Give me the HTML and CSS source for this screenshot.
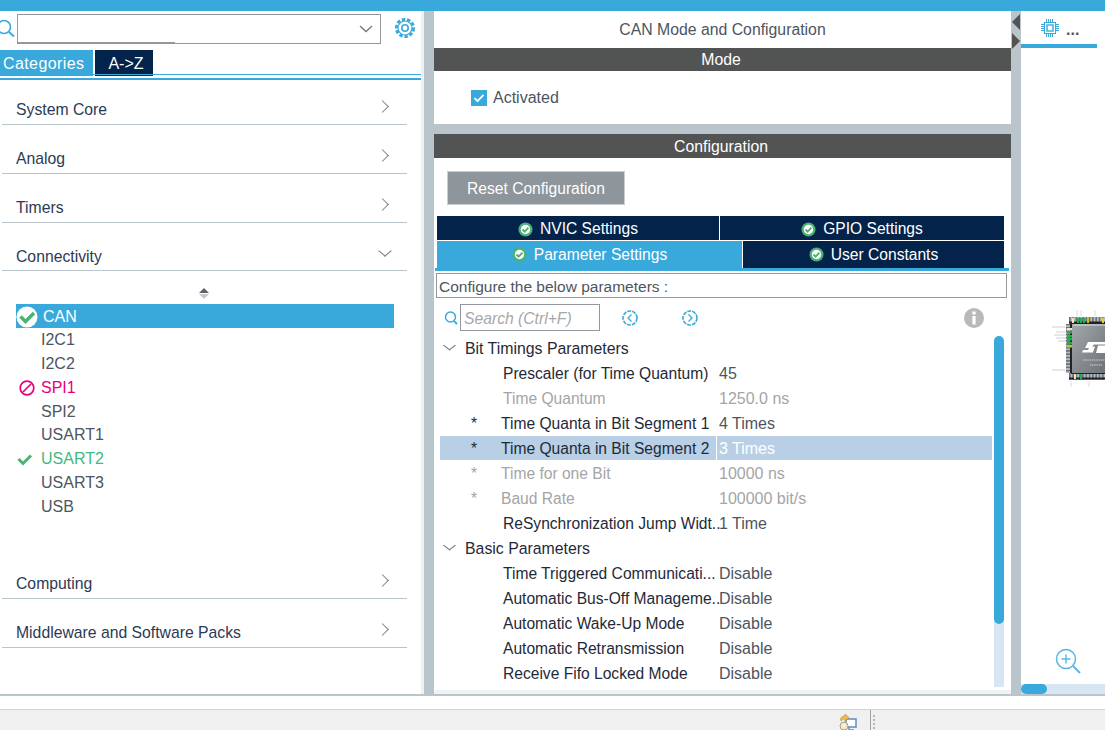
FILE: index.html
```html
<!DOCTYPE html>
<html lang="en">
<head>
    <meta charset="UTF-8">
    <meta name="viewport" content="width=device-width, initial-scale=1.0">
    <title>CAN Mode and Configuration</title>
    <link rel="stylesheet" href="styles.css">
</head>
<body>
    <svg class="defs" width="0" height="0">
        <symbol id="ok" viewBox="0 0 16 16">
            <circle cx="8" cy="8" r="7.5" fill="#4bb175"/>
            <circle cx="8" cy="8" r="5" fill="#fff"/>
            <path d="M4.8 8l2.3 2.4 4-4.4" fill="none" stroke="#4bb175" stroke-width="2"/>
        </symbol>
    </svg>

    <div class="topbar"></div>

    <div class="main">
        <!-- left column: categories -->
        <div class="left">
            <div class="search-row">
                <svg class="search-icon" width="17" height="30" viewBox="0 0 17 30"><circle cx="4" cy="13" r="6.5" fill="none" stroke="#39a9dc" stroke-width="1.6"/><path d="M9 18l5 4.5" stroke="#39a9dc" stroke-width="2"/></svg>
                <div class="combo">
                    <svg width="14" height="8" viewBox="0 0 14 8"><path d="M1 1l6 5.5L13 1" fill="none" stroke="#777" stroke-width="1.3"/></svg>
                </div>
                <svg class="gear" width="22" height="22" viewBox="0 0 22 22">
                    <circle cx="11" cy="11" r="8.6" fill="none" stroke="#39a9dc" stroke-width="3" stroke-dasharray="3.4 1.9"/>
                    <circle cx="11" cy="11" r="7" fill="#fff" stroke="#39a9dc" stroke-width="1.2"/>
                    <circle cx="11" cy="11" r="3.2" fill="none" stroke="#39a9dc" stroke-width="1.6"/>
                </svg>
            </div>
            <div class="tabs">
                <div class="tab tab-on">Categories</div>
                <div class="tab tab-off">A-&gt;Z</div>
            </div>

            <div class="cat"><span>System Core</span><i class="chev-r"></i></div>
            <div class="cat"><span>Analog</span><i class="chev-r"></i></div>
            <div class="cat"><span>Timers</span><i class="chev-r"></i></div>
            <div class="cat cat-open"><span>Connectivity</span><i class="chev-d"></i></div>

            <div class="peripherals">
                <div class="sorter"><i class="sort-up"></i><i class="sort-down"></i></div>
                <div class="item item-selected">
                    <span class="item-icon"><svg width="22" height="22" viewBox="0 0 22 22"><circle cx="11" cy="11" r="10.5" fill="#fff"/><path d="M4.5 10.5l5 5L18 7" fill="none" stroke="#4bb175" stroke-width="3.4"/></svg></span>CAN
                </div>
                <div class="item">I2C1</div>
                <div class="item">I2C2</div>
                <div class="item item-pink">
                    <span class="item-icon"><svg width="18" height="18" viewBox="0 0 18 18"><circle cx="9" cy="9" r="6.8" fill="none" stroke="#e6007e" stroke-width="1.7"/><path d="M5 13l8-8" stroke="#e6007e" stroke-width="1.7"/></svg></span>SPI1
                </div>
                <div class="item">SPI2</div>
                <div class="item">USART1</div>
                <div class="item item-green">
                    <span class="item-icon"><svg width="18" height="18" viewBox="0 0 18 18"><path d="M2.5 9l4.5 4.5 8-8" fill="none" stroke="#4bb175" stroke-width="3"/></svg></span>USART2
                </div>
                <div class="item">USART3</div>
                <div class="item">USB</div>
            </div>

            <div class="cat"><span>Computing</span><i class="chev-r"></i></div>
            <div class="cat"><span>Middleware and Software Packs</span><i class="chev-r"></i></div>
        </div>

        <div class="gutter"></div>

        <!-- center column: mode and configuration -->
        <div class="center">
            <div class="mode-panel">
                <div class="panel-title">CAN Mode and Configuration</div>
                <div class="band">Mode</div>
                <div class="activated">
                    <span class="checkbox"><svg width="16" height="16" viewBox="0 0 16 16"><path d="M3.5 8l3 3.2 6-6.4" fill="none" stroke="#fff" stroke-width="1.8"/></svg></span>
                    Activated
                </div>
            </div>

            <div class="config-panel">
                <div class="band band-tall">Configuration</div>
                <div class="reset-wrap"><div class="reset">Reset Configuration</div></div>

                <div class="cfg-tabs">
                    <div class="cfg-row cfg-row-top">
                        <div class="cfg-tab nvic"><svg class="ok" width="15" height="15"><use href="#ok"/></svg>NVIC Settings</div>
                        <div class="cfg-tab fill"><svg class="ok" width="15" height="15"><use href="#ok"/></svg>GPIO Settings</div>
                    </div>
                    <div class="cfg-row cfg-row-bottom">
                        <div class="cfg-tab params"><svg class="ok" width="15" height="15"><use href="#ok"/></svg>Parameter Settings</div>
                        <div class="cfg-tab fill"><svg class="ok" width="15" height="15"><use href="#ok"/></svg>User Constants</div>
                    </div>
                </div>

                <div class="configure-box">Configure the below parameters :</div>

                <div class="tools">
                    <svg class="tool-search" width="14" height="16" viewBox="0 0 14 16"><circle cx="6.5" cy="7" r="5" fill="none" stroke="#39a9dc" stroke-width="1.5"/><path d="M10 11l3 3" stroke="#39a9dc" stroke-width="1.8"/></svg>
                    <div class="search-box">Search (Ctrl+F)</div>
                    <svg class="nav nav-prev" width="18" height="18" viewBox="0 0 18 18"><circle cx="9" cy="9" r="7" fill="none" stroke="#39a9dc" stroke-width="1.6" stroke-dasharray="4 1"/><path d="M10.5 5.5L7 9l3.5 3.5" fill="none" stroke="#39a9dc" stroke-width="1.3"/></svg>
                    <svg class="nav nav-next" width="18" height="18" viewBox="0 0 18 18"><circle cx="9" cy="9" r="7" fill="none" stroke="#39a9dc" stroke-width="1.6" stroke-dasharray="4 1"/><path d="M7.5 5.5L11 9l-3.5 3.5" fill="none" stroke="#39a9dc" stroke-width="1.3"/></svg>
                    <svg class="info" width="20" height="20" viewBox="0 0 20 20"><circle cx="10" cy="10" r="10" fill="#b9b9b9"/><rect x="8.4" y="8" width="3.2" height="8.5" fill="#fff"/><rect x="8.4" y="3.5" width="3.2" height="3" fill="#fff"/></svg>
                </div>

                <div class="tree-wrap">
                    <div class="tree">
                        <div class="group"><i class="chev-small"></i>Bit Timings Parameters</div>
                        <div class="row"><div class="name">Prescaler (for Time Quantum)</div><div class="value">45</div></div>
                        <div class="row row-off"><div class="name">Time Quantum</div><div class="value">1250.0 ns</div></div>
                        <div class="row"><div class="name name-star"><span class="star">*</span>Time Quanta in Bit Segment 1</div><div class="value">4 Times</div></div>
                        <div class="row row-picked"><div class="name name-star"><span class="star">*</span>Time Quanta in Bit Segment 2</div><div class="value">3 Times</div></div>
                        <div class="row row-off"><div class="name name-star"><span class="star">*</span>Time for one Bit</div><div class="value">10000 ns</div></div>
                        <div class="row row-off"><div class="name name-star"><span class="star">*</span>Baud Rate</div><div class="value">100000 bit/s</div></div>
                        <div class="row"><div class="name">ReSynchronization Jump Widt..</div><div class="value">1 Time</div></div>
                        <div class="group"><i class="chev-small"></i>Basic Parameters</div>
                        <div class="row"><div class="name">Time Triggered Communicati...</div><div class="value">Disable</div></div>
                        <div class="row"><div class="name">Automatic Bus-Off Manageme..</div><div class="value">Disable</div></div>
                        <div class="row"><div class="name">Automatic Wake-Up Mode</div><div class="value">Disable</div></div>
                        <div class="row"><div class="name">Automatic Retransmission</div><div class="value">Disable</div></div>
                        <div class="row"><div class="name">Receive Fifo Locked Mode</div><div class="value">Disable</div></div>
                    </div>
                    <div class="vscroll"><div class="vthumb"></div></div>
                </div>
            </div>
        </div>

        <div class="gutter gutter-arrows">
            <i class="arrow-left"></i>
            <i class="arrow-right"></i>
        </div>

        <!-- right column: pinout view -->
        <div class="right">
            <div class="view-tab">
                <svg width="18" height="18" viewBox="0 0 18 18">
                    <rect x="3.5" y="3.5" width="11" height="11" fill="none" stroke="#39a9dc"/>
                    <rect x="6" y="6" width="6" height="6" fill="#fff" stroke="#39a9dc" stroke-width="1.4"/>
                    <path d="M5.5 0v3M7.5 0v3M9.5 0v3M11.5 0v3M5.5 15v3M7.5 15v3M9.5 15v3M11.5 15v3M0 5.5h3M0 7.5h3M0 9.5h3M0 11.5h3M15 5.5h3M15 7.5h3M15 9.5h3M15 11.5h3" stroke="#39a9dc"/>
                </svg>
                <span>...</span>
            </div>
            <div class="canvas">
                <svg class="chip" width="55" height="80" viewBox="0 0 55 80">
                    <defs>
                        <pattern id="pinsH" width="3.3" height="7" patternUnits="userSpaceOnUse"><rect width="3.3" height="7" fill="#222"/><rect x=".4" y="1.5" width="2.5" height="5" fill="#b4bec9"/></pattern>
                        <pattern id="pinsV" width="7" height="3.3" patternUnits="userSpaceOnUse"><rect width="7" height="3.3" fill="#222"/><rect x="1" y=".4" width="5" height="2.5" fill="#b4bec9"/></pattern>
                        <linearGradient id="die" x1="0" y1="0" x2="1" y2="1"><stop offset="0" stop-color="#a3a8ac"/><stop offset="1" stop-color="#6d7276"/></linearGradient>
                    </defs>
                    <rect x="19" y="9" width="36" height="7" fill="url(#pinsH)"/>
                    <rect x="19" y="65" width="36" height="7" fill="url(#pinsH)"/>
                    <rect x="16" y="16" width="6" height="49" fill="url(#pinsV)"/>
                    <rect x="21.500" y="15.500" width="34" height="50" fill="url(#die)" stroke="#222"/>
                    <path d="M23 17h32" stroke="#e0e2e4"/>
                    <rect x="27" y="10" width="2" height="5" fill="#19b24b"/><rect x="30" y="10" width="2" height="5" fill="#19b24b"/><rect x="33" y="10" width="2" height="5" fill="#19b24b"/><rect x="37" y="10" width="2" height="5" fill="#c8c020"/><rect x="22" y="10" width="2" height="5" fill="#f3e6b8"/><rect x="52" y="10" width="2" height="5" fill="#e6c93c"/>
                    <rect x="17" y="23" width="5" height="2.500" fill="#19b24b"/><rect x="17" y="27" width="5" height="2.500" fill="#19b24b"/><rect x="17" y="30" width="5" height="2.500" fill="#19b24b"/><rect x="17" y="34" width="5" height="2.500" fill="#19b24b"/><rect x="17" y="37" width="5" height="2.500" fill="#c8c020"/><rect x="17" y="20" width="5" height="2.500" fill="#f3e6b8"/>
                    <rect x="30" y="66" width="2" height="5" fill="#19b24b"/><rect x="24" y="66" width="2" height="5" fill="#f3e6b8"/>
                    <path d="M2 19h14M6 24h10M4 27h12M6 30h10M8 33h8M2 62h13" stroke="#d0d0d0"/>
                    <path d="M27 8V2M31 8V2M45 8V2M21 73v6M39 73v6" stroke="#dcdcdc"/>
                    <path d="M38 34h17v2.500H44l-2 2h3l-2 6H32l1-2.500h5l1-2h-4zM48 37.500h7V45h-9z" fill="#fff"/>
                    <path d="M33 52h22M40 57h12" stroke="#d0d3d6" stroke-dasharray="1.2 .6"/>
                </svg>
                <svg class="zoom-in" width="26" height="28" viewBox="0 0 26 28">
                    <circle cx="11" cy="11" r="9.500" fill="none" stroke="#58b6e2" stroke-width="1.5"/>
                    <path d="M11 6.500v9M6.500 11h9" stroke="#58b6e2" stroke-width="1.4"/>
                    <path d="M18 18l7 7" stroke="#58b6e2" stroke-width="2"/>
                </svg>
            </div>
            <div class="hscroll"><div class="hthumb"></div></div>
        </div>
    </div>

    <div class="strip"></div>
    <div class="statusbar">
        <div class="status-cell">
            <svg width="18" height="18" viewBox="0 0 18 18">
                <rect x="7" y="6" width="10" height="8" fill="#fff" stroke="#6d8fc4" stroke-width="1.6"/>
                <path d="M10 14v3h5" fill="none" stroke="#6d8fc4" stroke-width="1.5"/>
                <circle cx="5" cy="13" r="4" fill="#f4e9c3" stroke="#a8a08a"/>
                <circle cx="5" cy="13" r="1" fill="#fff"/>
                <path d="M1.500 7c0-3 2-4 4.500-4V1l4 3.500L6 8V6C4 6 3 6.500 2.500 8z" fill="#eebf4e" stroke="#b5862a" stroke-width=".6"/>
            </svg>
        </div>
        <div class="status-grip"></div>
    </div>
</body>
</html>
```

FILE: styles.css
```css
html, body {
    margin: 0;
    padding: 0;
    background: #fff;
    font-family: "Liberation Sans", Arial, sans-serif;
    font-size: 16px;
    overflow: hidden;
}

i {
    display: block;
}

.defs {
    display: block;
    height: 0;
}

.topbar {
    height: 11px;
    background: #39a9dc;
}

.main {
    display: flex;
    height: 683px;
    background: #b9c4cb;
    border-bottom: 2px solid #b9c4cb;
}

.gutter {
    width: 10px;
    flex: none;
}

.gutter-arrows {
    display: flex;
    flex-direction: column;
    align-items: center;
    padding-top: 3px;
    box-sizing: border-box;
}

.arrow-left {
    width: 0;
    height: 0;
    border: 8px solid transparent;
    border-left-width: 0;
    border-right: 8px solid #525453;
    margin-bottom: 3px;
}

.arrow-right {
    width: 0;
    height: 0;
    border: 8px solid transparent;
    border-right-width: 0;
    border-left: 8px solid #525453;
}

/* left column */
.left {
    width: 421px;
    border-right: 3px solid #eef2f6;
    background: #fff;
    flex: none;
}

.search-row {
    display: flex;
    align-items: flex-start;
    height: 39px;
    padding-top: 3px;
    box-sizing: border-box;
}

.search-icon {
    flex: none;
}

.combo {
    width: 364px;
    height: 30px;
    box-sizing: border-box;
    border: 1px solid #92989d;
    display: flex;
    align-items: center;
    justify-content: flex-end;
    padding-right: 7px;
    position: relative;
}

.combo::after {
    content: '';
    position: absolute;
    left: -1px;
    bottom: -1px;
    width: 158px;
    height: 2px;
    background: #92989d;
}

.gear {
    margin: 3px 0 0 13px;
}

.tabs {
    display: flex;
    height: 30px;
    box-sizing: border-box;
    border-bottom: 2px solid #39a9dc;
    position: relative;
}

.tabs::after {
    content: '';
    position: absolute;
    left: 0;
    right: 0;
    bottom: 3px;
    height: 1px;
    background: #39a9dc;
}

.tab {
    height: 26px;
    line-height: 27px;
    color: #fff;
}

.tab-on {
    width: 93px;
    padding-left: 3px;
    box-sizing: border-box;
    background: #39a9dc;
    letter-spacing: .4px;
    margin-right: 2px;
}

.tab-off {
    width: 58px;
    padding-left: 4px;
    box-sizing: border-box;
    text-align: center;
    background: #03234b;
}

.cat {
    height: 49px;
    width: 405px;
    margin-left: 2px;
    box-sizing: border-box;
    border-bottom: 1px solid #b9c4cb;
    padding: 0 18px 5px 14px;
    display: flex;
    justify-content: space-between;
    align-items: flex-end;
    color: #2c3a55;
    font-size: 15.75px;
}

.tabs + .cat {
    height: 45px;
}

.cat-open {
    height: 48px;
    padding-bottom: 4px;
}

.chev-r {
    width: 8px;
    height: 8px;
    border-top: 1.5px solid #7d8388;
    border-right: 1.5px solid #7d8388;
    transform: rotate(45deg);
    margin: 0 2px 8px 0;
}

.chev-d {
    width: 7px;
    height: 7px;
    border-bottom: 1.5px solid #7d8388;
    border-right: 1.5px solid #7d8388;
    transform: scaleX(1.2) rotate(45deg);
    margin: 0 0 11px 0;
}

.peripherals {
    height: 279px;
}

.sorter {
    height: 33.6px;
    padding: 17px 0 0 199px;
    box-sizing: border-box;
}

.sort-up {
    width: 0;
    border: 5px solid transparent;
    border-top-width: 0;
    border-bottom: 5px solid #5d6368;
    margin-bottom: 1px;
}

.sort-down {
    width: 0;
    border: 5px solid transparent;
    border-bottom-width: 0;
    border-top: 5px solid #c5c8ca;
}

.item {
    height: 23.75px;
    line-height: 24px;
    margin-left: 16px;
    width: 378px;
    padding-left: 25px;
    box-sizing: border-box;
    color: #4d5560;
    position: relative;
}

.item-icon {
    position: absolute;
    left: 0;
    top: 1px;
    display: block;
    height: 22px;
}

.item-selected {
    background: #39a9dc;
    box-shadow: 0 -1px 0 #39a9dc;
    color: #fff;
    padding-left: 27px;
}

.item-pink {
    color: #e6007e;
}

.item-pink .item-icon {
    top: 3px;
    left: 2px;
}

.item-green {
    color: #3fbb7d;
}

.item-green .item-icon {
    top: 3px;
}

/* center column */
.center {
    width: 577px;
    flex: none;
    display: flex;
    flex-direction: column;
    gap: 10px;
}

.mode-panel {
    height: 113px;
    background: #fff;
}

.panel-title {
    height: 37px;
    line-height: 37px;
    text-align: center;
    color: #4d5560;
    font-size: 15.8px;
}

.band {
    height: 23px;
    line-height: 23px;
    text-align: center;
    color: #fff;
    background: #525453;
    padding-right: 3px;
    font-size: 15.8px;
}

.band-tall {
    height: 24px;
    line-height: 25px;
}

.activated {
    display: flex;
    align-items: center;
    padding: 15px 0 0 37px;
    height: 23px;
    color: #4d5560;
}

.checkbox {
    width: 16px;
    height: 16px;
    background: #39a9dc;
    margin-right: 6px;
}

.config-panel {
    flex: 1;
    background: #fff;
    border-bottom: 4px solid #f0f3f6;
    display: flex;
    flex-direction: column;
    min-height: 0;
}

.reset-wrap {
    padding: 13px 0 11px 13px;
}

.reset {
    width: 178px;
    height: 34px;
    line-height: 33px;
    box-sizing: border-box;
    text-align: center;
    color: #fff;
    background: #8e959b;
    border: 1px solid #c9ced2;
    font-size: 15.6px;
}

.cfg-tabs {
    margin: 0 2px 0 1px;
    color: #fff;
    border-bottom: 3px solid #39a9dc;
    font-size: 15.6px;
}

.cfg-row {
    display: flex;
    gap: 1px;
    margin: 0 5px 0 2px;
}

.cfg-row-top {
    height: 24px;
    margin-bottom: 1px;
}

.cfg-row-top .cfg-tab {
    padding-top: 2px;
    box-sizing: border-box;
}

.cfg-row-bottom {
    height: 27px;
}

.cfg-tab {
    display: flex;
    align-items: center;
    justify-content: center;
    background: #03234b;
}

.nvic {
    width: 282px;
}

.params {
    width: 305px;
    background: #39a9dc;
}

.fill {
    flex: 1;
}

.ok {
    margin-right: 7px;
}

.configure-box {
    margin: 2px 4px 0 2px;
    height: 25px;
    line-height: 25px;
    box-sizing: border-box;
    border: 1px solid #92989d;
    padding-left: 2px;
    color: #4d5560;
    font-size: 15.5px;
}

.tools {
    display: flex;
    align-items: center;
    height: 28px;
    margin-top: 6px;
    flex: none;
    padding-left: 10px;
}

.search-box {
    width: 140px;
    height: 27px;
    line-height: 27px;
    box-sizing: border-box;
    border: 1px solid #92989d;
    margin: -1px 0 0 2px;
    padding-left: 3px;
    font-style: italic;
    color: #a5a8ab;
    font-size: 15.7px;
}

.nav-prev {
    margin-left: 21px;
}

.nav-next {
    margin-left: 42px;
}

.info {
    margin-left: 265px;
}

.tree-wrap {
    display: flex;
    margin-top: 4px;
    padding-left: 5px;
    height: 351px;
}

.tree {
    width: 553px;
    flex: none;
}

.group {
    height: 25px;
    line-height: 25px;
    padding-left: 26px;
    color: #1f2a38;
    position: relative;
    font-size: 15.85px;
}

.chev-small {
    position: absolute;
    left: 7px;
    top: 6px;
    width: 6px;
    height: 6px;
    border-bottom: 1.5px solid #7d8388;
    border-right: 1.5px solid #7d8388;
    transform: scaleX(1.3) rotate(45deg);
}

.row {
    display: grid;
    grid-template-columns: 277px 1fr;
    height: 25px;
    line-height: 25px;
    color: #1f2a38;
}

.name {
    padding-left: 64px;
    white-space: nowrap;
    font-size: 15.6px;
    min-width: 0;
}

.name-star {
    padding-left: 32px;
    display: flex;
}

.star {
    width: 30px;
    flex: none;
}

.value {
    padding-left: 3px;
    color: #4d5560;
}

.row-off .name,
.row-off .value {
    color: #a5a5a5;
}

.row-picked {
    grid-template-columns: 276px 1fr;
    height: 24px;
    margin: 0 0 1px 1px;
    background: #b8cfe6;
}

.row-picked .name {
    padding-left: 31px;
}

.row-picked .value {
    color: #fff;
    border-left: 1px solid #fff;
    padding-left: 2px;
}

.vscroll {
    width: 10px;
    height: 351px;
    margin-left: 2px;
    background: #d8e6f3;
    border-radius: 5px 5px 0 0;
}

.vthumb {
    height: 288px;
    background: #39a9dc;
    border-radius: 5px;
}

/* right column */
.right {
    flex: 1;
    background: #fff;
    display: flex;
    flex-direction: column;
}

.view-tab {
    width: 76px;
    height: 37px;
    box-sizing: border-box;
    border-bottom: 4px solid #39a9dc;
    display: flex;
    align-items: center;
    padding: 0 0 0 20px;
    gap: 7px;
    color: #555;
    font-weight: bold;
}

.view-tab span {
    font-size: 16px;
    padding-top: 4px;
}

.canvas {
    flex: 1;
    position: relative;
    overflow: hidden;
}

.chip {
    position: absolute;
    left: 29px;
    top: 260px;
}

.zoom-in {
    position: absolute;
    left: 34px;
    top: 600px;
}

.hscroll {
    height: 10px;
    background: #d8e6f3;
}

.hthumb {
    width: 26px;
    height: 10px;
    background: #39a9dc;
    border-radius: 5px;
}

/* bottom bars */
.strip {
    height: 13px;
    background: #fff;
    border-bottom: 1px solid #d4d4d4;
}

.statusbar {
    height: 20px;
    background: #f0f0f0;
    display: flex;
    padding-left: 838px;
}

.status-cell {
    width: 33px;
    box-sizing: border-box;
    border-right: 1px solid #a0a0a0;
    padding: 3px 0 0 1px;
    height: 20px;
}

.status-grip {
    width: 2px;
    margin: 5px 0 0 2px;
    height: 15px;
    background: repeating-linear-gradient(#b5b5b5 0 2px, transparent 2px 4px);
}
```
